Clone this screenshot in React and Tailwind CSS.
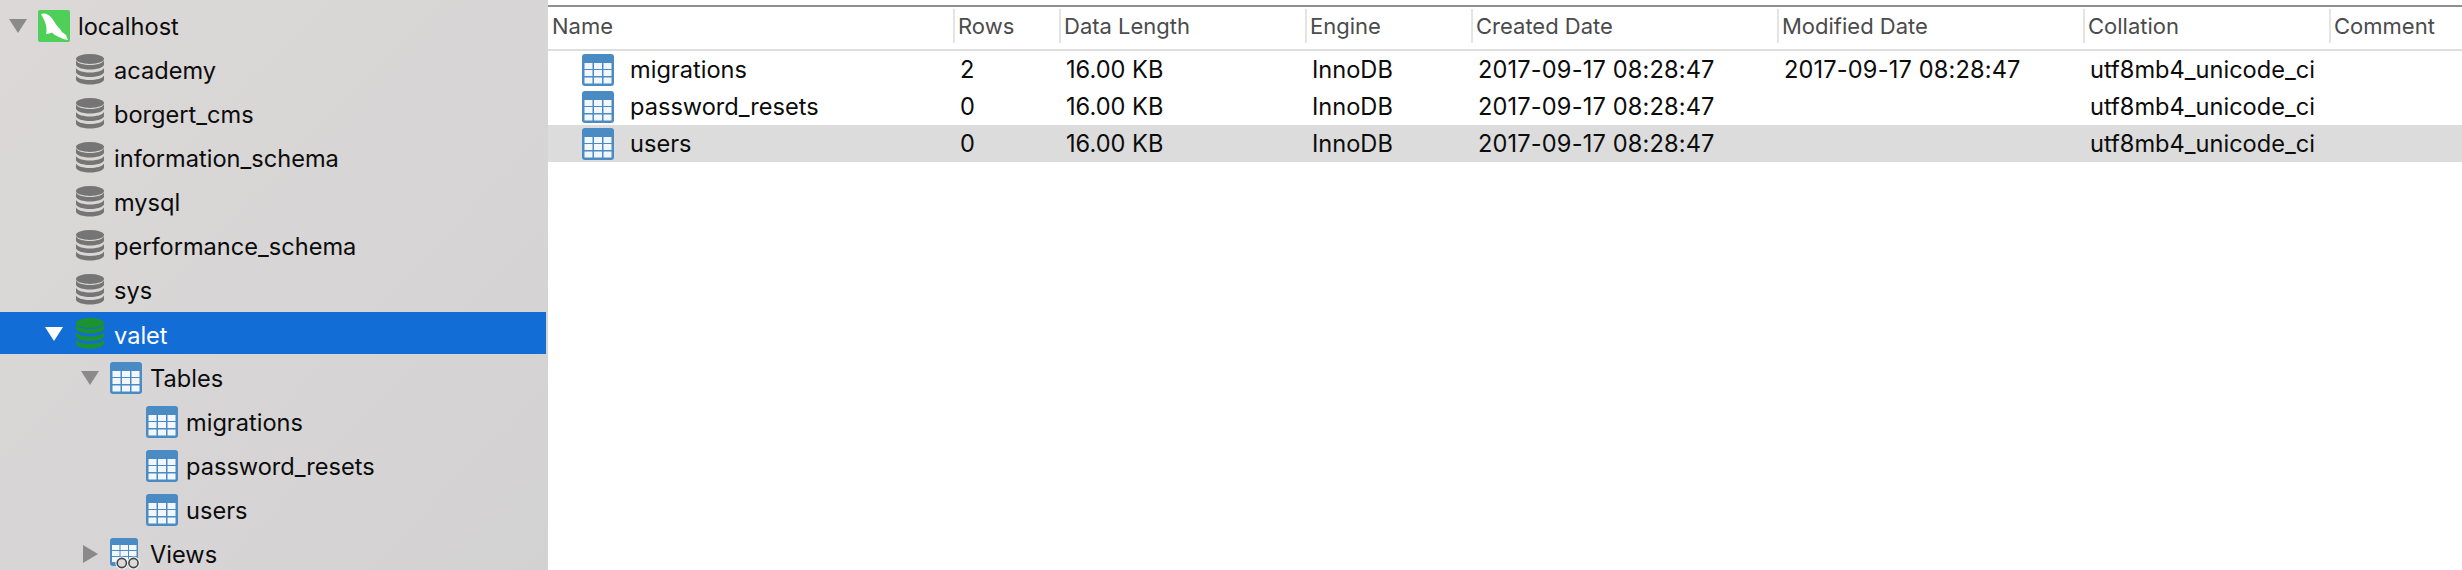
import React from "react";

/* ==================== ICONS ==================== */
const TriangleDown = ({ white }) => (
  <svg width="18" height="14" viewBox="0 0 18 14" className="ml-[7px] shrink-0">
    <path d="M0 0H18L9 14Z" fill={white ? "#ffffff" : "#8b8a8a"} />
  </svg>
);

const TriangleRight = () => (
  <svg width="15" height="18" viewBox="0 0 15 18" className="ml-[9px] shrink-0">
    <path d="M0 0L15 9L0 18Z" fill="#8b8a8a" />
  </svg>
);

const cellXs = [2.5, 12, 21.5];
const cellYs = [9, 16, 23.5];

const TableIcon = () => (
  <svg width="32" height="32" viewBox="0 0 32 32" className="shrink-0">
    <rect width="32" height="32" rx="3" fill="#4a8bc4" />
    {cellYs.map((y) =>
      cellXs.map((x) => (
        <rect key={`${x}-${y}`} x={x} y={y} width="8" height="6" fill="#f1f7fc" />
      ))
    )}
  </svg>
);

const ViewIcon = () => (
  <svg width="32" height="32" viewBox="0 0 32 32" className="shrink-0">
    <rect width="28" height="28" rx="3" fill="#4a8bc4" />
    {[7, 13, 19].map((y) =>
      [2, 10.5, 19].map((x) => (
        <rect key={`${x}-${y}`} x={x} y={y} width="7.5" height="5" fill="#f1f7fc" />
      ))
    )}
    <circle cx="11.8" cy="25" r="6.5" fill="#f4f4f4" />
    <circle cx="23.5" cy="25" r="6.5" fill="#f4f4f4" />
    <circle cx="11.8" cy="25" r="4.6" fill="#dcdcdc" stroke="#444444" strokeWidth="1.6" />
    <circle cx="23.5" cy="25" r="4.6" fill="#dcdcdc" stroke="#444444" strokeWidth="1.6" />
  </svg>
);

const DbIcon = ({ color }) => (
  <svg width="28" height="32" viewBox="0 0 28 32" className="ml-[2px] mr-[2px] shrink-0">
    <ellipse cx="14" cy="5" rx="14" ry="5" fill={color} />
    {[6.5, 14, 21.5].map((y) => (
      <path
        key={y}
        d={`M0 ${y}C3 ${y + 6} 25 ${y + 6} 28 ${y}V${y + 4.5}C25 ${y + 10.5} 3 ${y + 10.5} 0 ${y + 4.5}Z`}
        fill={color}
      />
    ))}
  </svg>
);

const MysqlIcon = () => (
  <svg width="32" height="32" viewBox="0 0 32 32" className="shrink-0">
    <rect width="32" height="32" rx="2" fill="#4ed058" />
    <path
      d="M3 4C6 2.500 11 4 14.500 9C17 13 19 16 22 19L24 22L28 25L30 30C27 29.500 25 29 22 27.500C19 26 16.500 25 14 22.500C12.500 23 10.500 24 8 24C9 21 8.500 18 8 15.500C7 11 5 8 3 4Z"
      fill="#ffffff"
    />
  </svg>
);

/* ==================== SIDEBAR ==================== */
const treeRows = [
  { name: "localhost", level: 0, open: true, icon: "mysql" },
  { name: "academy", level: 1, icon: "db" },
  { name: "borgert_cms", level: 1, icon: "db" },
  { name: "information_schema", level: 1, icon: "db" },
  { name: "mysql", level: 1, icon: "db" },
  { name: "performance_schema", level: 1, icon: "db" },
  { name: "sys", level: 1, icon: "db" },
  { name: "valet", level: 1, open: true, icon: "db", active: true },
  { name: "Tables", level: 2, open: true, icon: "table" },
  { name: "migrations", level: 3, icon: "table" },
  { name: "password_resets", level: 3, icon: "table" },
  { name: "users", level: 3, icon: "table" },
  { name: "Views", level: 2, closed: true, icon: "view" },
];

const indents = ["pl-[2px]", "pl-[38px]", "pl-[74px]", "pl-[110px]"];

const TreeRow = ({ row }) => (
  <div
    className={`flex items-center shrink-0 ${indents[row.level]} ${
      row.active
        ? "h-[42px] pt-[2px] mb-[2px] mr-[2px] bg-[#136dd6] text-white"
        : "h-[44px] text-[#0c0c0c]"
    }`}
  >
    <div className="w-[36px] flex items-center shrink-0">
      {row.open && <TriangleDown white={row.active} />}
      {row.closed && <TriangleRight />}
    </div>
    {row.icon === "mysql" && <MysqlIcon />}
    {row.icon === "db" && <DbIcon color={row.active ? "#1d9330" : "#767575"} />}
    {row.icon === "table" && <TableIcon />}
    {row.icon === "view" && <ViewIcon />}
    <span
      className={`ml-[8px] text-[23.6px] leading-none whitespace-nowrap ${
        row.active ? "pt-[3px]" : "pt-[2px]"
      }`}
    >
      {row.name}
    </span>
  </div>
);

const Sidebar = () => (
  <div className="w-[548px] h-full shrink-0 overflow-hidden pt-[4px] flex flex-col bg-gradient-to-br from-[#dcd8d8] to-[#d3d2d3]">
    {treeRows.map((row) => (
      <TreeRow key={row.name} row={row} />
    ))}
  </div>
);

/* ==================== TABLE ==================== */
const columns = [
  { label: "Name", width: "w-[405px]" },
  { label: "Rows", width: "w-[106px]" },
  { label: "Data Length", width: "w-[246px]" },
  { label: "Engine", width: "w-[166px]" },
  { label: "Created Date", width: "w-[306px]" },
  { label: "Modified Date", width: "w-[306px]" },
  { label: "Collation", width: "w-[246px]" },
  { label: "Comment", width: "flex-1" },
];

const tableRows = [
  { name: "migrations", rows: "2", modified: "2017-09-17 08:28:47" },
  { name: "password_resets", rows: "0", modified: "" },
  { name: "users", rows: "0", modified: "", selected: true },
];

const HeaderRow = () => (
  <div className="h-[44px] flex pt-[2px] border-b-2 border-[#dedede]">
    {columns.map((col, i) => (
      <div
        key={col.label}
        className={`${col.width} h-[34px] flex items-center text-[22px] text-[#4b4b4b] whitespace-nowrap ${
          i === 0 ? "pl-[4px]" : "pl-[3px] border-l-2 border-[#e4e4e4]"
        }`}
      >
        {col.label}
      </div>
    ))}
  </div>
);

const TableRow = ({ row }) => (
  <div
    className={`h-[37px] pt-[1px] flex items-center text-[23.6px] text-[#0c0c0c] whitespace-nowrap ${
      row.selected ? "bg-[#dcdcdc]" : ""
    }`}
  >
    <div className="w-[405px] flex items-center pl-[34px]">
      <TableIcon />
      <span className="ml-[16px]">{row.name}</span>
    </div>
    <div className="w-[106px] pl-[7px]">{row.rows}</div>
    <div className="w-[246px] pl-[7px]">16.00 KB</div>
    <div className="w-[166px] pl-[7px]">InnoDB</div>
    <div className="w-[306px] pl-[7px] tracking-[0.15px]">2017-09-17 08:28:47</div>
    <div className="w-[306px] pl-[7px] tracking-[0.15px]">{row.modified}</div>
    <div className="w-[246px] pl-[7px]">utf8mb4_unicode_ci</div>
  </div>
);

/* ==================== APP ==================== */
export default function App() {
  return (
    <div className="w-[2462px] h-[570px] flex overflow-hidden bg-white font-['Inter',sans-serif]">
      <Sidebar />
      <div className="flex-1 flex flex-col pt-[5px]">
        <div className="h-[2px] bg-[#8f8f8f]" />
        <HeaderRow />
        {tableRows.map((row) => (
          <TableRow key={row.name} row={row} />
        ))}
      </div>
    </div>
  );
}
